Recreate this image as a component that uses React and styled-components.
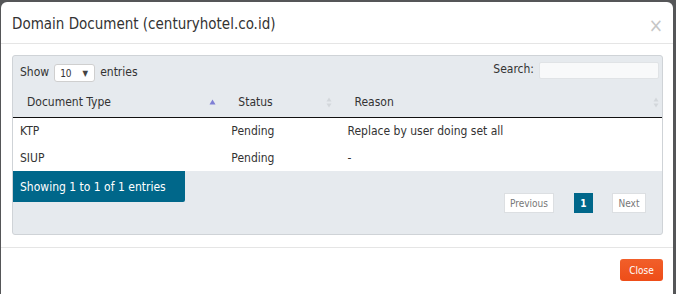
import React from 'react';
import styled, { createGlobalStyle } from 'styled-components';

const GlobalStyle = createGlobalStyle`
  html, body {
    margin: 0;
    padding: 0;
    background: #555658;
    overflow: hidden;
  }
  body {
    font-family: "DejaVu Sans Condensed", "DejaVu Sans", sans-serif;
    font-stretch: condensed;
    color: #333;
  }
`;

const Modal = styled.div`
  margin: 2px 0 0 1px;
  width: 672px;
  height: 310px;
  background: #fff;
  border-radius: 6px;
  box-sizing: border-box;
`;

const Header = styled.div`
  height: 42px;
  box-sizing: border-box;
  padding: 12px 11px 0 11px;
  border-bottom: 1px solid #e5e5e5;
  display: flex;
  justify-content: space-between;
  align-items: flex-start;
`;

const Title = styled.h4`
  margin: 0;
  font-size: 15px;
  line-height: 20px;
  font-weight: normal;
  color: #333;
`;

const CloseX = styled.span`
  font-size: 19px;
  line-height: 20px;
  color: #c6c6c6;
  margin-right: -1px;
  margin-top: 1px;
`;

const Body = styled.div`
  padding: 11px 10px 12px 11px;
`;

const Panel = styled.div`
  background: #e6eaee;
  border: 1px solid #cfd3d7;
  border-radius: 3px;
  height: 180px;
  box-sizing: border-box;
`;

const Toolbar = styled.div`
  display: flex;
  justify-content: space-between;
  align-items: center;
  height: 32px;
  padding: 0 3px 0 7px;
  font-size: 12px;
`;

const Label = styled.label`
  display: flex;
  align-items: center;
  gap: 5px;
`;

const SearchText = styled.span`
  margin-top: -6px;
`;

const Select = styled.div`
  width: 41px;
  height: 18px;
  box-sizing: border-box;
  background: #fff;
  border: 1px solid #cfcfcf;
  border-radius: 3px;
  font-size: 10px;
  display: flex;
  align-items: center;
  justify-content: space-between;
  padding: 0 6px 0 5px;
  margin-top: 2px;
  &::after {
    content: "▼";
    font-size: 8px;
    color: #444;
  }
`;

const SearchInput = styled.div`
  width: 120px;
  height: 17px;
  box-sizing: border-box;
  background: #f8f9fa;
  border: 1px solid #e0e3e6;
  border-radius: 2px;
  margin-top: -4px;
`;

const Table = styled.table`
  width: 100%;
  border-collapse: collapse;
  table-layout: fixed;
  font-size: 12px;
`;

const Th = styled.th`
  width: ${p => p.w}px;
  height: 29px;
  padding: 0 ${p => p.pr ?? 8}px 0 14px;
  text-align: left;
  font-weight: normal;
  color: #333;
  border-bottom: 1px solid #111;
  box-sizing: border-box;
`;

const ThInner = styled.div`
  display: flex;
  justify-content: space-between;
  align-items: center;
`;

const Td = styled.td`
  height: 27px;
  padding: 0 8px 0 7px;
  background: #fff;
  color: #333;
  box-sizing: border-box;
`;

const Bottom = styled.div`
  display: flex;
  justify-content: space-between;
  align-items: flex-start;
`;

const Info = styled.div`
  background: #00678a;
  color: #fff;
  font-size: 12px;
  width: 172px;
  height: 31px;
  box-sizing: border-box;
  padding-left: 7px;
  display: flex;
  align-items: center;
  border-radius: 0 0 2px 0;
`;

const Paginate = styled.div`
  display: flex;
  padding: 22px 16px 0 0;
`;

const PageBtn = styled.span`
  width: ${p => p.w}px;
  margin-left: ${p => p.ml || 0}px;
  height: 20px;
  box-sizing: border-box;
  font-size: 10px;
  display: flex;
  align-items: center;
  justify-content: center;
  background: ${p => (p.current ? '#00678a' : '#fff')};
  color: ${p => (p.current ? '#fff' : '#777')};
  border: 1px solid ${p => (p.current ? '#00678a' : '#dcdfe2')};
  font-weight: ${p => (p.current ? 'bold' : 'normal')};
`;

const Footer = styled.div`
  border-top: 1px solid #e5e5e5;
  padding: 11px 10px 0 0;
  display: flex;
  justify-content: flex-end;
`;

const CloseButton = styled.button`
  font-family: inherit;
  font-stretch: condensed;
  height: 22px;
  width: 43px;
  border: none;
  border-radius: 3px;
  background: linear-gradient(#f15f2a, #ee4d18);
  color: #fff;
  font-size: 10px;
  padding: 0;
`;

const SortIcon = ({ active }) =>
  active ? (
    <svg width="7" height="6" viewBox="0 0 7 6">
      <path d="M3.5 0.5 L6.5 5.5 L0.5 5.5 Z" fill="#7f7fd5" />
    </svg>
  ) : (
    <svg width="6" height="11" viewBox="0 0 6 11">
      <path d="M3 0.5 L5.5 4.5 L0.5 4.5 Z M3 10.5 L5.5 6.5 L0.5 6.5 Z" fill="#d3d7db" />
    </svg>
  );

const rows = [
  { type: 'KTP', status: 'Pending', reason: 'Replace by user doing set all' },
  { type: 'SIUP', status: 'Pending', reason: '-' },
];

export default function App() {
  return (
    <>
      <GlobalStyle />
      <Modal>
        <Header>
          <Title>Domain Document (centuryhotel.co.id)</Title>
          <CloseX>×</CloseX>
        </Header>
        <Body>
          <Panel>
            <Toolbar>
              <Label>
                Show <Select>10</Select> entries
              </Label>
              <Label>
                <SearchText>Search:</SearchText> <SearchInput />
              </Label>
            </Toolbar>
            <Table>
              <thead>
                <tr>
                  <Th w={211}>
                    <ThInner>Document Type <SortIcon active /></ThInner>
                  </Th>
                  <Th w={116}>
                    <ThInner>Status <SortIcon /></ThInner>
                  </Th>
                  <Th w={321} pr={3}>
                    <ThInner>Reason <SortIcon /></ThInner>
                  </Th>
                </tr>
              </thead>
              <tbody>
                {rows.map(r => (
                  <tr key={r.type}>
                    <Td>{r.type}</Td>
                    <Td>{r.status}</Td>
                    <Td>{r.reason}</Td>
                  </tr>
                ))}
              </tbody>
            </Table>
            <Bottom>
              <Info>Showing 1 to 1 of 1 entries</Info>
              <Paginate>
                <PageBtn w={50}>Previous</PageBtn>
                <PageBtn w={19} ml={20} current>1</PageBtn>
                <PageBtn w={34} ml={19}>Next</PageBtn>
              </Paginate>
            </Bottom>
          </Panel>
        </Body>
        <Footer>
          <CloseButton>Close</CloseButton>
        </Footer>
      </Modal>
    </>
  );
}
